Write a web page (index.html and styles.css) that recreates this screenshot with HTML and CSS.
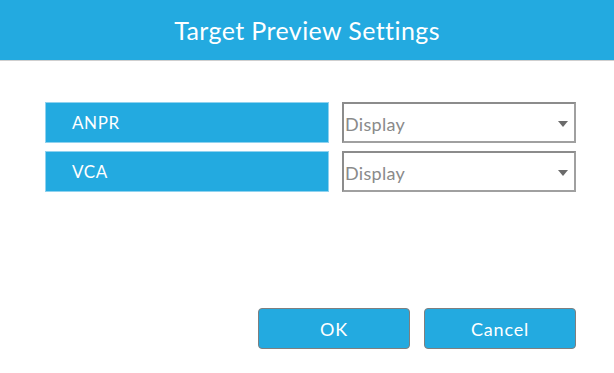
FILE: index.html
```html
<!DOCTYPE html>
<html lang="en">
<head>
  <meta charset="UTF-8">
  <meta name="viewport" content="width=device-width, initial-scale=1.0">
  <title>Target Preview Settings</title>
  <link rel="stylesheet" href="styles.css">
</head>
<body>
  <div class="dialog">
    <header class="title-bar">Target Preview Settings</header>

    <div class="content">
      <div class="row">
        <div class="label">ANPR</div>
        <div class="dropdown">
          <span>Display</span>
          <svg class="arrow" width="10" height="6" viewBox="0 0 10 6"><polygon points="0,0 10,0 5,6" fill="#6b6b6b"/></svg>
        </div>
      </div>
      <div class="row">
        <div class="label">VCA</div>
        <div class="dropdown">
          <span>Display</span>
          <svg class="arrow" width="10" height="6" viewBox="0 0 10 6"><polygon points="0,0 10,0 5,6" fill="#6b6b6b"/></svg>
        </div>
      </div>
    </div>

    <div class="btn-group">
      <button>OK</button>
      <button>Cancel</button>
    </div>
  </div>
</body>
</html>
```

FILE: styles.css
```css
body {
  margin: 0;
  padding: 0;
  font-family: 'Lato', 'DejaVu Sans', sans-serif;
  background-color: #ffffff;
}

.dialog {
  width: 614px;
  height: 373px;
  display: flex;
  flex-direction: column;
}

.title-bar {
  height: 60px;
  background-color: #23aae0;
  border-bottom: 1px solid #cfcfcf;
  color: #ffffff;
  font-size: 25px;
  display: flex;
  align-items: center;
  justify-content: center;
  letter-spacing: 0.4px;
}

.content {
  padding: 41px 38px 0 45px;
  display: flex;
  flex-direction: column;
  gap: 8px;
}

.row {
  display: flex;
  gap: 13px;
  height: 41px;
}

.label {
  width: 284px;
  box-sizing: border-box;
  background-color: #23aae0;
  border: 1px solid #8fd2ef;
  color: #ffffff;
  font-size: 17px;
  letter-spacing: 0.6px;
  padding-left: 26px;
  display: flex;
  align-items: center;
}

.dropdown {
  width: 234px;
  box-sizing: border-box;
  border: 2px solid #8c8c8c;
  border-right-color: #a0a0a0;
  border-bottom-color: #a0a0a0;
  color: #8a8a8a;
  font-size: 18px;
  letter-spacing: 0.3px;
  padding: 2px 6px 0 1px;
  display: flex;
  align-items: center;
  justify-content: space-between;
}

.btn-group {
  margin-top: auto;
  margin-bottom: 24px;
  padding-right: 38px;
  display: flex;
  justify-content: flex-end;
  gap: 14px;
}

button {
  width: 152px;
  height: 41px;
  background-color: #23aae0;
  border: 1px solid #7f7f7f;
  border-radius: 4px;
  color: #ffffff;
  font-family: inherit;
  font-size: 18px;
  letter-spacing: 0.8px;
  cursor: pointer;
}
```
